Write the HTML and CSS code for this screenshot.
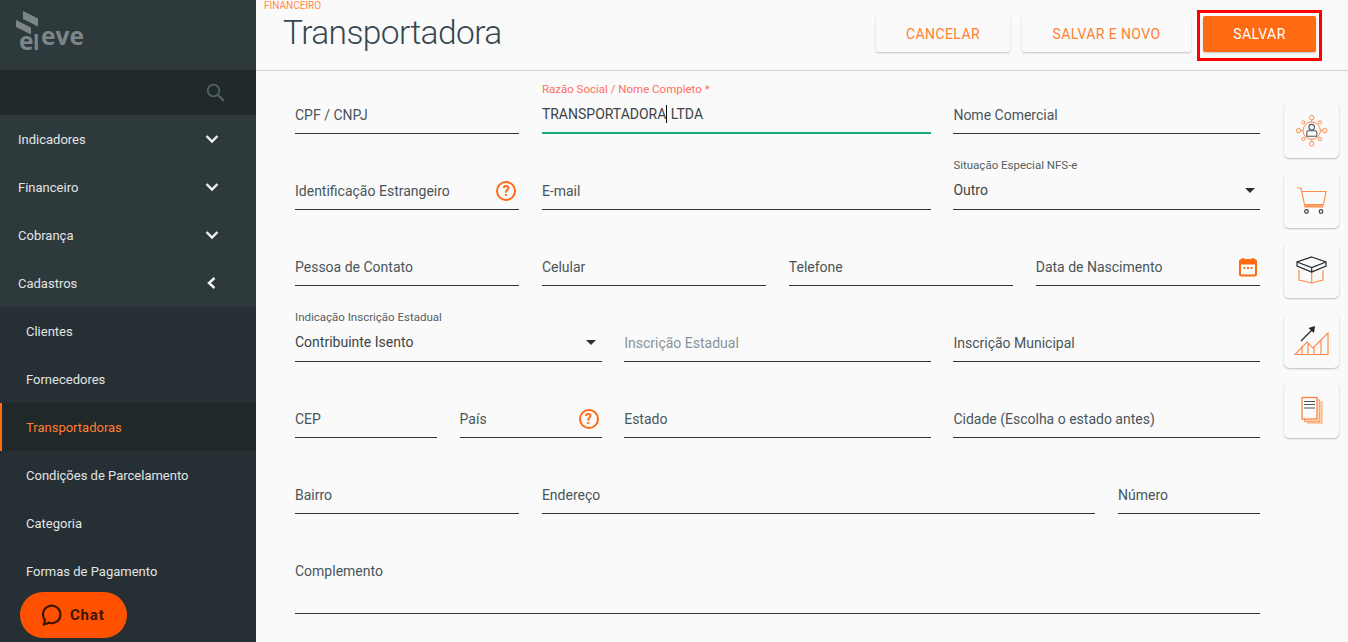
FILE: index.html
```html
<!DOCTYPE html>
<html lang="pt-BR">
<head>
<meta charset="utf-8">
<title>Transportadora</title>
<link rel="stylesheet" href="styles.css">
</head>
<body>
<div class="app">
  <aside class="sidebar">
    <div class="brand">
      <svg class="logo" width="100" height="60" viewBox="0 0 100 60">
        <polygon points="23,11 38,18.5 38,26.5 23,19" />
        <polygon points="16,20 31,27.5 31,34.5 16,27" />
        <text x="19" y="50" class="logo-text">e</text>
        <text x="33" y="50" class="logo-text small">l</text>
        <text x="41" y="45" class="logo-text">eve</text>
      </svg>
    </div>
    <div class="search">
      <svg width="22" height="22" viewBox="0 0 22 22" fill="none" stroke="#4f6468" stroke-width="1.8"><circle cx="8.5" cy="8.5" r="5.8"/><path d="M13 13 L19 19" stroke-width="2.2"/></svg>
    </div>
    <nav class="menu">
      <a class="item">Indicadores<svg class="chev" width="14" height="10" viewBox="0 0 14 10"><path d="M1.5 2 L7 7.5 L12.5 2"/></svg></a>
      <a class="item">Financeiro<svg class="chev" width="14" height="10" viewBox="0 0 14 10"><path d="M1.5 2 L7 7.5 L12.5 2"/></svg></a>
      <a class="item">Cobrança<svg class="chev" width="14" height="10" viewBox="0 0 14 10"><path d="M1.5 2 L7 7.5 L12.5 2"/></svg></a>
      <a class="item">Cadastros<svg class="chev" width="14" height="14" viewBox="0 0 14 14"><path d="M9.5 2 L4 7 L9.5 12"/></svg></a>
      <div class="submenu">
        <a class="subitem">Clientes</a>
        <a class="subitem">Fornecedores</a>
        <a class="subitem active">Transportadoras</a>
        <a class="subitem">Condições de Parcelamento</a>
        <a class="subitem">Categoria</a>
        <a class="subitem">Formas de Pagamento</a>
        <a class="subitem">Centro de Custos</a>
      </div>
    </nav>
    <button class="chat">
      <svg width="22" height="22" viewBox="0 0 22 22" fill="none" stroke="#3d1503" stroke-width="2.2"><path d="M3 20.5 L4 16 A8.7 8.7 0 1 1 7.6 18.6 Q5.5 20 3 20.5 Z"/></svg>
      <span>Chat</span>
    </button>
  </aside>

  <main class="content">
    <header class="topbar">
      <div class="titles">
        <div class="crumb">FINANCEIRO</div>
        <h1 class="title">Transportadora</h1>
      </div>
      <div class="actions">
        <button class="btn">CANCELAR</button>
        <button class="btn">SALVAR E NOVO</button>
        <button class="btn primary">SALVAR</button>
        <span class="highlight"></span>
      </div>
    </header>

    <div class="body">
      <form class="form">
        <div class="field s3"><div class="line">CPF / CNPJ</div></div>
        <div class="field s5 focused"><label class="float accent">Razão Social / Nome Completo *</label><div class="line value">TRANSPORTADORA<span class="caret"></span> LTDA</div></div>
        <div class="field s4"><div class="line">Nome Comercial</div></div>

        <div class="field s3"><div class="line">Identificação Estrangeiro<span class="help">?</span></div></div>
        <div class="field s5"><div class="line">E-mail</div></div>
        <div class="field s4"><label class="float">Situação Especial NFS-e</label><div class="line value">Outro<span class="arrow"></span></div></div>

        <div class="field s3"><div class="line">Pessoa de Contato</div></div>
        <div class="field s3"><div class="line">Celular</div></div>
        <div class="field s3"><div class="line">Telefone</div></div>
        <div class="field s3"><div class="line">Data de Nascimento<svg class="cal" width="20" height="20" viewBox="0 0 20 20"><path d="M5 1 V4 M15 1 V4" stroke="#ff6a13" stroke-width="2"/><rect x="2" y="3" width="16" height="15.5" rx="1.5" fill="#fff" stroke="#ff6a13" stroke-width="2"/><rect x="2" y="3" width="16" height="4.5" fill="#ff6a13"/><path d="M5.5 11 H7.5 M9 11 H11 M12.5 11 H14.5" stroke="#ff6a13" stroke-width="2"/></svg></div></div>

        <div class="field s4"><label class="float">Indicação Inscrição Estadual</label><div class="line value">Contribuinte Isento<span class="arrow left"></span></div></div>
        <div class="field s4"><div class="line muted">Inscrição Estadual</div></div>
        <div class="field s4"><div class="line">Inscrição Municipal</div></div>

        <div class="field s2"><div class="line">CEP</div></div>
        <div class="field s2"><div class="line">País<span class="help">?</span></div></div>
        <div class="field s4"><div class="line">Estado</div></div>
        <div class="field s4"><div class="line">Cidade (Escolha o estado antes)</div></div>

        <div class="field s3"><div class="line">Bairro</div></div>
        <div class="field s7"><div class="line">Endereço</div></div>
        <div class="field s2"><div class="line">Número</div></div>

        <div class="field s12 tall"><div class="line">Complemento</div></div>
      </form>

      <div class="rail">
        <div class="card">
          <svg width="55" height="55" viewBox="0 0 55 55" fill="none" stroke="#ff8c4d" stroke-width="1">
            <circle cx="27.7" cy="27.7" r="8.7"/>
            <circle cx="27.7" cy="14.6" r="2.2"/><circle cx="27.7" cy="40.8" r="2.2"/><circle cx="14.6" cy="27.7" r="2.2"/><circle cx="40.8" cy="27.7" r="2.2"/>
            <circle cx="19.4" cy="19.4" r="1.6"/><circle cx="36" cy="19.4" r="1.6"/><circle cx="19.4" cy="36" r="1.6"/><circle cx="36" cy="36" r="1.6"/>
            <path d="M27.7 17 V19 M27.7 36.4 V38.5 M17 27.7 H19 M36.4 27.7 H38.5"/>
            <g stroke="#55595b"><circle cx="27.7" cy="24.2" r="2.8" stroke-width="1.1"/><path d="M22.8 33.3 V29.4 Q22.8 27.8 24.5 27.8 H31 Q32.8 27.8 32.8 29.4 V33.3 Z" stroke-width="1.1"/></g>
          </svg>
        </div>
        <div class="card">
          <svg width="55" height="55" viewBox="0 0 55 55" fill="none" stroke="#ff8c4d" stroke-width="1.2">
            <path d="M13 15 H17 L21 34 H39.5"/>
            <path d="M18 18.5 H42 L39.5 31.5 H20.5"/>
            <path d="M20.5 33 H39" stroke-width="1.6"/>
            <g stroke="#3a3f41"><circle cx="22.5" cy="38.5" r="1.8"/><circle cx="37" cy="38.5" r="1.8"/></g>
          </svg>
        </div>
        <div class="card">
          <svg width="55" height="55" viewBox="0 0 55 55" fill="none" stroke-width="1.2">
            <path d="M15 27 V37 L27.7 40 L39 37 V27 M27.7 29 V40" stroke="#ff8c4d"/>
            <path d="M27.7 14 L42 19 V23 L27.7 29 L13 23 V19 Z M13 19 L27.7 24.5 L42 19 M27.7 24.5 V29" stroke="#26282a"/>
          </svg>
        </div>
        <div class="card">
          <svg width="55" height="55" viewBox="0 0 55 55" fill="none" stroke="#ff8c4d" stroke-width="1.2">
            <path d="M11 41.5 L23 29 L29 35 L44 20 V41.5 Z"/>
            <path d="M18 33 V41.5 M24 30 V41.5 M30 34 V41.5 M37 27 V41.5"/>
            <path d="M17 28 L28 17" stroke="#26282a"/>
            <polygon points="31,13 30,20 24.5,15" fill="#26282a" stroke="none"/>
          </svg>
        </div>
        <div class="card">
          <svg width="55" height="55" viewBox="0 0 55 55" fill="none" stroke-width="1.2">
            <rect x="23.5" y="19" width="14.5" height="21" fill="#ffd2b3" stroke="#ffb283"/>
            <rect x="20.5" y="17" width="15" height="21.5" fill="#ffe3cf" stroke="#ffa26b"/>
            <rect x="18" y="14.5" width="15" height="21.5" fill="#fafafa" stroke="#ff7d33"/>
            <path d="M20 18.5 H31 M20 21.5 H31 M20 25 H31" stroke="#555"/>
          </svg>
        </div>
      </div>
    </div>
  </main>
</div>
</body>
</html>
```
FILE: styles.css
```css
* { box-sizing: border-box; }
html, body { margin: 0; height: 100%; overflow: hidden; }
body { font-family: Roboto, "Open Sans", sans-serif; font-size: 14px; color: #37474f; background: #fafafa; }
.app { display: flex; width: 1348px; height: 642px; overflow: hidden; }

/* Sidebar */
.sidebar { position: relative; width: 256px; flex: none; background: #2e393c; display: flex; flex-direction: column; color: #e1e4e4; overflow: hidden; font-size: 13px; }
.brand { height: 70px; flex: none; }
.logo { display: block; fill: #7c8688; }
.logo-text { font-family: "Open Sans", sans-serif; font-size: 24.5px; font-weight: 700; }
.logo-text.small { font-size: 21px; }
.search { height: 45px; flex: none; background: #22292b; display: flex; align-items: center; justify-content: flex-end; padding: 0 29px 0 0; }
.menu { display: flex; flex-direction: column; flex: none; }
.item { height: 48px; display: flex; align-items: center; justify-content: space-between; padding: 0 37px 0 18px; }
.chev { fill: none; stroke: #f2f3f3; stroke-width: 2.4; }
.submenu { background: #263034; display: flex; flex-direction: column; }
.subitem { height: 48px; display: flex; align-items: center; padding-left: 26px; }
.subitem.active { background: #20282a; color: #ff7f32; border-left: 2px solid #ff6a13; padding-left: 24px; }
.chat { position: absolute; left: 20px; top: 592px; width: 107px; height: 46px; border: 0; border-radius: 23px; background: #ff5100; color: #3d1503; display: flex; align-items: center; gap: 7px; padding: 0 0 0 21px; font-family: Roboto, sans-serif; font-size: 15px; font-weight: 700; letter-spacing: 0.8px; }

/* Content */
.content { flex: 1; min-width: 0; display: flex; flex-direction: column; }
.topbar { height: 71px; flex: none; border-bottom: 1px solid #d3d3d3; display: flex; justify-content: space-between; padding: 0 32px 0 8px; }
.crumb { font-size: 10px; line-height: 12px; color: #ff8a4c; }
.title { margin: 0 0 0 19px; padding-top: 1px; font-size: 33.5px; line-height: 40px; font-weight: 300; letter-spacing: -0.6px; color: #37474f; }
.actions { position: relative; display: flex; gap: 12px; padding-top: 16px; }
.btn { height: 36px; border: 0; border-radius: 2px; background: #fafafa; color: #ff7f32; font-family: Roboto, sans-serif; font-size: 14px; letter-spacing: 0.4px; padding: 0; width: 134px; box-shadow: 0 1px 2px rgba(0,0,0,.22); }
.btn:nth-child(2) { width: 169px; }
.btn.primary { width: 113px; background: #ff6a13; color: #fff; }
.highlight { position: absolute; right: -6px; top: 10px; width: 125px; height: 51px; border: 3px solid #f00; }

.body { flex: 1; min-height: 0; display: flex; }
.form { width: 1004px; flex: none; padding: 9px 0 0 39px; display: grid; grid-template-columns: repeat(12, 1fr); column-gap: 22.6px; row-gap: 22px; grid-auto-rows: 54px; align-content: start; }
.s2 { grid-column: span 2; } .s3 { grid-column: span 3; } .s4 { grid-column: span 4; } .s5 { grid-column: span 5; } .s7 { grid-column: span 7; } .s12 { grid-column: span 12; }
.field { display: flex; flex-direction: column; justify-content: flex-end; border-bottom: 1px solid #2c3638; height: 54px; }
.field.tall { height: 78px; padding-bottom: 24px; }
.field.focused { border-bottom: 2px solid #1aaa7e; }
.float { font-size: 11.5px; line-height: 12px; margin-bottom: 9px; color: #555f63; }
.float.accent { color: #ff6f61; }
.line { height: 20px; margin-bottom: 8px; line-height: 20px; display: flex; align-items: center; color: #4a5559; white-space: pre; }
.line.value { margin-bottom: 9px; color: #3a4448; }
.focused .line.value { margin-bottom: 8px; }
.line.muted { color: #8a9295; }
.caret { display: inline-block; width: 1px; height: 18px; background: #111; }
.help { width: 20px; height: 20px; margin-left: auto; margin-right: 3px; border: 2px solid #ff6a13; border-radius: 50%; color: #ff6a13; font-size: 14px; font-weight: 700; line-height: 16px; text-align: center; }
.arrow { width: 0; height: 0; margin-left: auto; margin-right: 5px; border: 5px solid transparent; border-top-color: #263238; border-bottom: 0; }
.arrow.left { margin-right: 6px; }
.cal { margin-left: auto; margin-right: 2px; }

.rail { margin-left: 24px; width: 55px; padding-top: 32px; display: flex; flex-direction: column; gap: 15px; }
.card { width: 55px; height: 55px; border-radius: 5px; background: #fafafa; box-shadow: 0 1px 2px rgba(0,0,0,.25); }
.card svg { display: block; }
```
